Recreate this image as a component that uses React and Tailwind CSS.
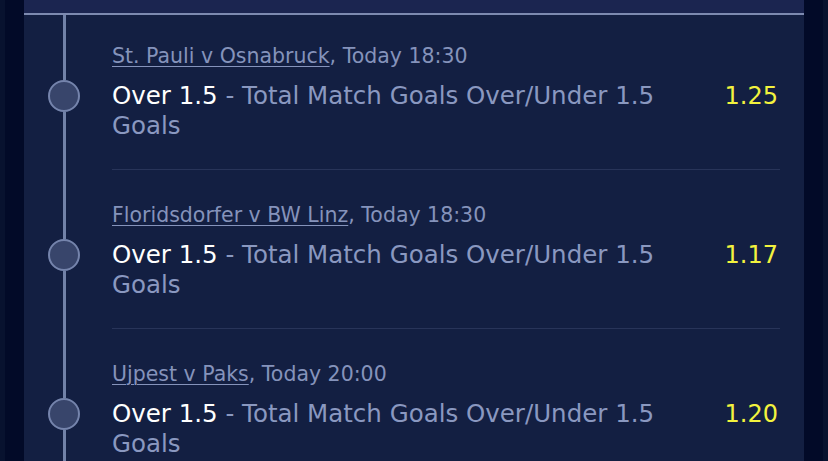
import React from 'react'

const bets = [
  { match: 'St. Pauli v Osnabruck', time: 'Today 18:30', odds: '1.25' },
  { match: 'Floridsdorfer v BW Linz', time: 'Today 18:30', odds: '1.17' },
  { match: 'Ujpest v Paks', time: 'Today 20:00', odds: '1.20' },
]

const BetRow = ({ bet, first }) => (
  <div className="flex">
    {/* timeline */}
    <div className="w-[80px] shrink-0 flex flex-col items-center">
      <div className={`w-[3px] bg-[#7282a8] ${first ? 'h-[65px]' : 'h-[69px]'}`} />
      <div className="w-[32px] h-[32px] shrink-0 rounded-full bg-[#38456b] border-2 border-[#7584ac]" />
      <div className="w-[3px] flex-1 bg-[#7282a8]" />
    </div>

    <div
      className={`flex-1 ml-[8px] border-b border-[#283459] pr-[2px] pb-[28px] ${
        first ? 'pt-[29px]' : 'pt-[33px]'
      }`}
    >
      <div className="text-[20.5px] leading-[24px] text-[#8593bb]">
        <span className="underline underline-offset-[3px] decoration-1">{bet.match}</span>, {bet.time}
      </div>
      <div className="flex items-start mt-[13px]">
        <div className="w-[580px] text-[24.5px] leading-[30px] text-[#8a98c0]">
          <span className="text-white">Over 1.5</span> - Total Match Goals Over/Under 1.5 Goals
        </div>
        <div className="ml-auto text-[24px] leading-[30px] text-[#f2f23e]">{bet.odds}</div>
      </div>
    </div>
  </div>
)

export default function App() {
  return (
    <div
      className="h-[461px] overflow-hidden flex bg-[#020a28]"
      style={{ fontFamily: '"DejaVu Sans", Verdana, sans-serif' }}
    >
      <div className="w-[5px] bg-[#08122f]" />
      <div className="w-[19px]" />
      <div className="flex-1 bg-[#131f42] pr-[24px]">
        <div className="h-[13px] bg-[#1b2550] border-b-2 border-[#7d8ab0] -mr-[24px] box-content" />
        {bets.map((b, i) => (
          <BetRow key={i} bet={b} first={i === 0} />
        ))}
      </div>
      <div className="w-[19px]" />
      <div className="w-[5px] bg-[#08122f]" />
    </div>
  )
}
